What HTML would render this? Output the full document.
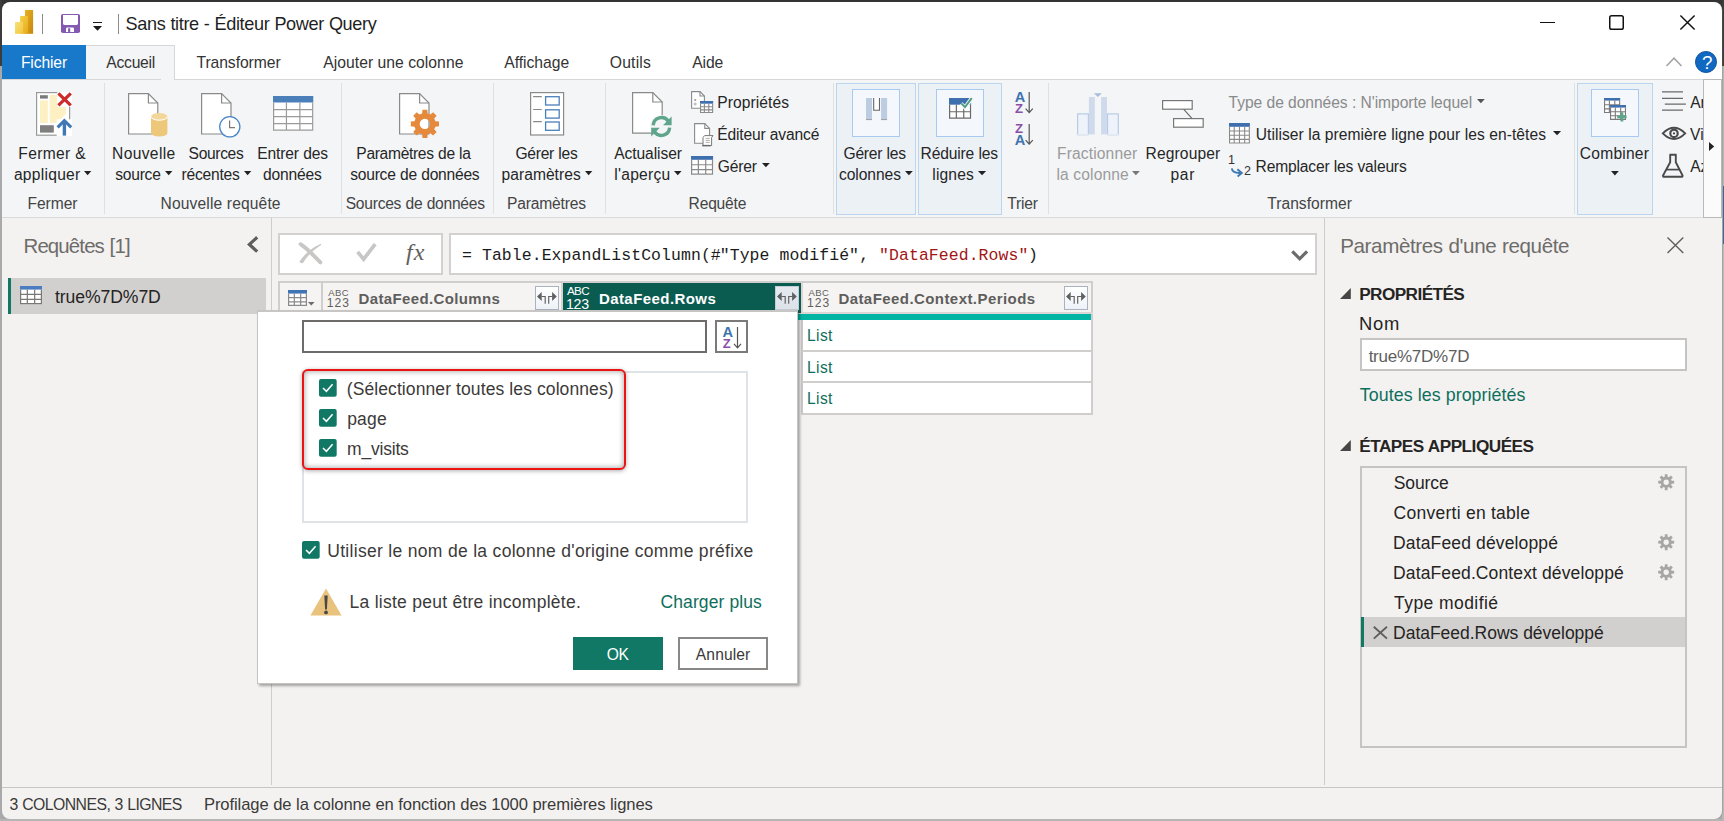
<!DOCTYPE html>
<html lang="fr"><head><meta charset="utf-8"><title>Sans titre - Éditeur Power Query</title>
<style>html,body{margin:0;padding:0}body{width:1724px;height:821px;overflow:hidden;position:relative;background:#a8a8a8}
div,span,svg{position:absolute;box-sizing:border-box}.t{white-space:pre;line-height:1}svg{overflow:visible}</style></head>
<body>
<div style="left:0px;top:0px;width:1724px;height:11px;background:#343434"></div>
<div style="left:1722px;top:0px;width:2px;height:66px;background:#3c3c3c"></div>
<div style="left:1722px;top:66px;width:2px;height:120px;background:#b6b6b6"></div>
<div style="left:1722px;top:186px;width:2px;height:58px;background:#3a6a9a"></div>
<div style="left:1722px;top:244px;width:2px;height:577px;background:#b8b8b8"></div>
<div style="left:1.5px;top:1.5px;width:1721px;height:818px;border-radius:8.5px;background:linear-gradient(#4a4a4a 0,#4a4a4a 64px,#a4a4a4 64px)"></div>
<div style="left:0px;top:0px;width:2px;height:66px;background:#3c3c3c"></div>
<div style="left:0px;top:66px;width:2px;height:755px;background:#a9a9a9"></div>
<div style="left:0px;top:819px;width:1724px;height:2px;background:#b4b5b4"></div>
<div style="left:2px;top:2px;width:1720px;height:817px;border-radius:8px;background:linear-gradient(#fff 0,#fff 78px,#f3f5f7 78px,#f3f5f7 215px,#f3f2f1 215px)"></div>
<svg style="left:15px;top:10px;" width="19" height="24" viewBox="0 0 19 24"><defs><linearGradient id="g1" x1="0" y1="0" x2="1" y2="1"><stop offset="0" stop-color="#e8b01f"/><stop offset="1" stop-color="#c7860d"/></linearGradient>
<linearGradient id="g2" x1="0" y1="0" x2="1" y2="1"><stop offset="0" stop-color="#f6d048"/><stop offset="1" stop-color="#e6a91c"/></linearGradient>
<linearGradient id="g3" x1="0" y1="0" x2="1" y2="1"><stop offset="0" stop-color="#f8e17a"/><stop offset="1" stop-color="#f3c73a"/></linearGradient></defs>
<rect x="10" y="0" width="8.1" height="23.8" fill="url(#g1)"/><rect x="5.1" y="6" width="8" height="17.8" fill="url(#g2)"/><rect x="0" y="12" width="8" height="11.8" fill="url(#g3)"/></svg>
<div style="left:42px;top:14px;width:1px;height:20px;background:#8c8c8c"></div>
<div style="left:118px;top:14px;width:1px;height:20px;background:#8c8c8c"></div>
<svg style="left:61px;top:14px;" width="19" height="19" viewBox="0 0 19 19"><rect x="0" y="0" width="19" height="19" rx="1.8" fill="#8559b2"/><path d="M2 1H17V9.6Q17 11 15.6 11H3.4Q2 11 2 9.6Z" fill="#fff"/><path d="M5 18V14.7Q5 13.5 6.2 13.5H11.8Q13 13.5 13 14.7V18H9.2V14.3H7.1V18Z" fill="#fff"/></svg>
<div style="left:93px;top:22px;width:9.2px;height:1.4px;background:#1a1a1a"></div>
<svg style="left:93.1px;top:25.9px;" width="9" height="4.8" viewBox="0 0 9 4.8"><path d="M0 0H9L4.5 4.8Z" fill="#1a1a1a"/></svg>
<span class="t" style="left:125.59px;top:15.00px;font:400 18.1px/1 'Liberation Sans',sans-serif;color:#1f1f1f;letter-spacing:-0.357px;word-spacing:0.357px;">Sans titre - Éditeur Power Query</span>
<div style="left:1540px;top:21.6px;width:15.2px;height:1.4px;background:#111"></div>
<svg style="left:1609px;top:15px;" width="15" height="15" viewBox="0 0 15 15"><rect x="0.75" y="0.75" width="13.5" height="13.5" rx="1.8" fill="none" stroke="#111" stroke-width="1.5"/></svg>
<svg style="left:1680px;top:15px;" width="15" height="15" viewBox="0 0 15 15"><path d="M0.4 0.4L14.6 14.6M14.6 0.4L0.4 14.6" stroke="#111" stroke-width="1.45" fill="none"/></svg>
<svg style="left:1666px;top:57px;" width="16" height="10" viewBox="0 0 16 10"><path d="M0.5 9L8 1.2L15.5 9" stroke="#a3a3a3" stroke-width="1.5" fill="none"/></svg>
<div style="left:1695.2px;top:51px;width:21.8px;height:21.8px;border-radius:50%;background:#1168c2;border:1px solid #0c55a0"></div>
<span class="t" style="left:1702.05px;top:54.00px;font:400 18.8px/1 'Liberation Sans',sans-serif;color:#fff;">?</span>
<div style="left:2px;top:45px;width:84px;height:34.5px;background:#1878c9"></div>
<div style="left:174px;top:78.8px;width:1548px;height:1.2px;background:#d6d7d9"></div>
<div style="left:86px;top:44.8px;width:89.2px;height:35.5px;background:#f3f5f7;border:1.2px solid #d6d7d9;border-bottom:0;border-left:0"></div>
<div style="left:2px;top:78.8px;width:159px;height:1.2px;background:#d6d7d9"></div>
<span class="t" style="left:20.90px;top:55.00px;font:400 15.7px/1 'Liberation Sans',sans-serif;color:#fff;letter-spacing:-0.128px;">Fichier</span>
<span class="t" style="left:106.26px;top:55.00px;font:400 15.7px/1 'Liberation Sans',sans-serif;color:#333;letter-spacing:-0.256px;">Accueil</span>
<span class="t" style="left:196.45px;top:55.00px;font:400 15.7px/1 'Liberation Sans',sans-serif;color:#333;letter-spacing:-0.061px;">Transformer</span>
<span class="t" style="left:323.26px;top:55.00px;font:400 15.7px/1 'Liberation Sans',sans-serif;color:#333;letter-spacing:0.031px;">Ajouter une colonne</span>
<span class="t" style="left:504.26px;top:55.00px;font:400 15.7px/1 'Liberation Sans',sans-serif;color:#333;letter-spacing:-0.031px;">Affichage</span>
<span class="t" style="left:609.85px;top:55.00px;font:400 15.7px/1 'Liberation Sans',sans-serif;color:#333;letter-spacing:0.168px;">Outils</span>
<span class="t" style="left:692.36px;top:55.00px;font:400 15.7px/1 'Liberation Sans',sans-serif;color:#333;letter-spacing:-0.198px;">Aide</span>
<div style="left:2px;top:216.6px;width:1720px;height:1.3px;background:#d9d9d9"></div>
<div style="left:103.9px;top:83px;width:1.2px;height:131px;background:#dfe0e2"></div>
<div style="left:340.6px;top:83px;width:1.2px;height:131px;background:#dfe0e2"></div>
<div style="left:492.9px;top:83px;width:1.2px;height:131px;background:#dfe0e2"></div>
<div style="left:604.9px;top:83px;width:1.2px;height:131px;background:#dfe0e2"></div>
<div style="left:832.6px;top:83px;width:1.2px;height:131px;background:#dfe0e2"></div>
<div style="left:1047.6px;top:83px;width:1.2px;height:131px;background:#dfe0e2"></div>
<div style="left:1573.8px;top:83px;width:1.2px;height:131px;background:#dfe0e2"></div>
<div style="left:836.2px;top:83.2px;width:79.6px;height:131.6px;background:#ecf1f6;border:1.2px solid #bcd5ef"></div>
<div style="left:918px;top:83.2px;width:83.8px;height:131.6px;background:#ecf1f6;border:1.2px solid #bcd5ef"></div>
<div style="left:1577.4px;top:83.2px;width:75.2px;height:131.6px;background:#ecf1f6;border:1.2px solid #bcd5ef"></div>
<div style="left:852px;top:89px;width:48px;height:47.8px;background:#f4f7fb;border:1.2px solid #a8caf0"></div>
<div style="left:936px;top:89px;width:48px;height:47.8px;background:#f4f7fb;border:1.2px solid #a8caf0"></div>
<div style="left:1591.2px;top:89px;width:47.6px;height:47.8px;background:#f4f7fb;border:1.2px solid #a8caf0"></div>
<span class="t" style="left:18.31px;top:146.00px;font:400 15.6px/1 'Liberation Sans',sans-serif;color:#262626;letter-spacing:0.344px;">Fermer &amp;</span>
<span class="t" style="left:13.94px;top:167.00px;font:400 15.6px/1 'Liberation Sans',sans-serif;color:#262626;letter-spacing:0.263px;">appliquer</span>
<svg style="left:83.8px;top:170.9px;" width="7.3" height="4.2" viewBox="0 0 7.3 4.2"><path d="M0 0H7.3L3.65 4.2Z" fill="#222"/></svg>
<span class="t" style="left:112.11px;top:146.00px;font:400 15.6px/1 'Liberation Sans',sans-serif;color:#262626;letter-spacing:0.338px;">Nouvelle</span>
<span class="t" style="left:115.17px;top:167.00px;font:400 15.6px/1 'Liberation Sans',sans-serif;color:#262626;letter-spacing:-0.222px;">source</span>
<svg style="left:165px;top:170.9px;" width="7.4" height="4.2" viewBox="0 0 7.4 4.2"><path d="M0 0H7.4L3.7 4.2Z" fill="#222"/></svg>
<span class="t" style="left:188.60px;top:146.00px;font:400 15.6px/1 'Liberation Sans',sans-serif;color:#262626;letter-spacing:-0.344px;">Sources</span>
<span class="t" style="left:181.59px;top:167.00px;font:400 15.6px/1 'Liberation Sans',sans-serif;color:#262626;letter-spacing:-0.238px;">récentes</span>
<svg style="left:243.8px;top:170.9px;" width="7.3" height="4.2" viewBox="0 0 7.3 4.2"><path d="M0 0H7.3L3.65 4.2Z" fill="#222"/></svg>
<span class="t" style="left:257.31px;top:146.00px;font:400 15.6px/1 'Liberation Sans',sans-serif;color:#262626;letter-spacing:-0.153px;word-spacing:0.153px;">Entrer des</span>
<span class="t" style="left:262.94px;top:167.00px;font:400 15.6px/1 'Liberation Sans',sans-serif;color:#262626;letter-spacing:-0.176px;">données</span>
<span class="t" style="left:356.31px;top:146.00px;font:400 15.6px/1 'Liberation Sans',sans-serif;color:#262626;letter-spacing:-0.319px;word-spacing:0.319px;">Paramètres de la</span>
<span class="t" style="left:350.17px;top:167.00px;font:400 15.6px/1 'Liberation Sans',sans-serif;color:#262626;letter-spacing:-0.224px;word-spacing:0.224px;">source de données</span>
<span class="t" style="left:515.52px;top:146.00px;font:400 15.6px/1 'Liberation Sans',sans-serif;color:#262626;letter-spacing:-0.276px;word-spacing:0.276px;">Gérer les</span>
<span class="t" style="left:501.59px;top:167.00px;font:400 15.6px/1 'Liberation Sans',sans-serif;color:#262626;letter-spacing:0.029px;">paramètres</span>
<svg style="left:584.8px;top:170.9px;" width="7.3" height="4.2" viewBox="0 0 7.3 4.2"><path d="M0 0H7.3L3.65 4.2Z" fill="#222"/></svg>
<span class="t" style="left:614.26px;top:146.00px;font:400 15.6px/1 'Liberation Sans',sans-serif;color:#262626;letter-spacing:-0.090px;">Actualiser</span>
<span class="t" style="left:614.35px;top:167.00px;font:400 15.6px/1 'Liberation Sans',sans-serif;color:#262626;letter-spacing:0.248px;">l'aperçu</span>
<svg style="left:673.5px;top:170.9px;" width="7.6" height="4.2" viewBox="0 0 7.6 4.2"><path d="M0 0H7.6L3.8 4.2Z" fill="#222"/></svg>
<span class="t" style="left:843.52px;top:146.00px;font:400 15.6px/1 'Liberation Sans',sans-serif;color:#262626;letter-spacing:-0.233px;word-spacing:0.233px;">Gérer les</span>
<span class="t" style="left:838.94px;top:167.00px;font:400 15.6px/1 'Liberation Sans',sans-serif;color:#262626;letter-spacing:-0.047px;">colonnes</span>
<svg style="left:904.5px;top:170.9px;" width="7.8" height="4.2" viewBox="0 0 7.8 4.2"><path d="M0 0H7.8L3.9 4.2Z" fill="#222"/></svg>
<span class="t" style="left:920.61px;top:146.00px;font:400 15.6px/1 'Liberation Sans',sans-serif;color:#262626;letter-spacing:-0.163px;word-spacing:0.163px;">Réduire les</span>
<span class="t" style="left:932.35px;top:167.00px;font:400 15.6px/1 'Liberation Sans',sans-serif;color:#262626;letter-spacing:0.129px;">lignes</span>
<svg style="left:977.5px;top:170.9px;" width="8.1" height="4.2" viewBox="0 0 8.1 4.2"><path d="M0 0H8.1L4.05 4.2Z" fill="#222"/></svg>
<span class="t" style="left:1057.11px;top:146.00px;font:400 15.6px/1 'Liberation Sans',sans-serif;color:#9b9b9b;letter-spacing:0.122px;">Fractionner</span>
<span class="t" style="left:1056.55px;top:167.00px;font:400 15.6px/1 'Liberation Sans',sans-serif;color:#9b9b9b;letter-spacing:0.113px;">la colonne</span>
<svg style="left:1132px;top:170.9px;" width="7.8" height="4.2" viewBox="0 0 7.8 4.2"><path d="M0 0H7.8L3.9 4.2Z" fill="#777"/></svg>
<span class="t" style="left:1145.61px;top:146.00px;font:400 15.6px/1 'Liberation Sans',sans-serif;color:#262626;letter-spacing:0.114px;">Regrouper</span>
<span class="t" style="left:1170.39px;top:167.00px;font:400 15.6px/1 'Liberation Sans',sans-serif;color:#262626;letter-spacing:0.753px;">par</span>
<span class="t" style="left:1579.82px;top:146.00px;font:400 15.6px/1 'Liberation Sans',sans-serif;color:#262626;letter-spacing:0.213px;">Combiner</span>
<svg style="left:1610.8px;top:171.1px;" width="7.8" height="4.4" viewBox="0 0 7.8 4.4"><path d="M0 0H7.8L3.9 4.4Z" fill="#222"/></svg>
<span class="t" style="left:27.51px;top:196.00px;font:400 15.6px/1 'Liberation Sans',sans-serif;color:#444;letter-spacing:-0.050px;">Fermer</span>
<span class="t" style="left:160.61px;top:196.00px;font:400 15.6px/1 'Liberation Sans',sans-serif;color:#444;letter-spacing:0.134px;">Nouvelle requête</span>
<span class="t" style="left:345.70px;top:196.00px;font:400 15.6px/1 'Liberation Sans',sans-serif;color:#444;letter-spacing:-0.250px;word-spacing:0.250px;">Sources de données</span>
<span class="t" style="left:507.01px;top:196.00px;font:400 15.6px/1 'Liberation Sans',sans-serif;color:#444;letter-spacing:-0.164px;">Paramètres</span>
<span class="t" style="left:688.61px;top:196.00px;font:400 15.6px/1 'Liberation Sans',sans-serif;color:#444;letter-spacing:-0.203px;">Requête</span>
<span class="t" style="left:1007.25px;top:196.00px;font:400 15.6px/1 'Liberation Sans',sans-serif;color:#444;letter-spacing:-0.197px;">Trier</span>
<span class="t" style="left:1267.25px;top:196.00px;font:400 15.6px/1 'Liberation Sans',sans-serif;color:#444;letter-spacing:0.033px;">Transformer</span>
<span class="t" style="left:717.31px;top:95.00px;font:400 15.6px/1 'Liberation Sans',sans-serif;color:#262626;letter-spacing:0.071px;">Propriétés</span>
<span class="t" style="left:717.31px;top:127.00px;font:400 15.6px/1 'Liberation Sans',sans-serif;color:#262626;letter-spacing:-0.167px;word-spacing:0.167px;">Éditeur avancé</span>
<span class="t" style="left:717.82px;top:159.00px;font:400 15.6px/1 'Liberation Sans',sans-serif;color:#262626;letter-spacing:-0.186px;">Gérer</span>
<svg style="left:761.8px;top:162.9px;" width="7.8" height="4.2" viewBox="0 0 7.8 4.2"><path d="M0 0H7.8L3.9 4.2Z" fill="#222"/></svg>
<span class="t" style="left:1228.55px;top:95.00px;font:400 15.6px/1 'Liberation Sans',sans-serif;color:#8a8a8a;letter-spacing:-0.038px;">Type de données : N'importe lequel</span>
<svg style="left:1476.5px;top:98.5px;" width="7.8" height="4.2" viewBox="0 0 7.8 4.2"><path d="M0 0H7.8L3.9 4.2Z" fill="#555"/></svg>
<span class="t" style="left:1255.69px;top:127.00px;font:400 15.6px/1 'Liberation Sans',sans-serif;color:#262626;letter-spacing:0.058px;">Utiliser la première ligne pour les en-têtes</span>
<svg style="left:1552.5px;top:130.5px;" width="8.1" height="4.2" viewBox="0 0 8.1 4.2"><path d="M0 0H8.1L4.05 4.2Z" fill="#222"/></svg>
<span class="t" style="left:1255.61px;top:159.00px;font:400 15.6px/1 'Liberation Sans',sans-serif;color:#262626;letter-spacing:-0.177px;word-spacing:0.177px;">Remplacer les valeurs</span>
<div style="left:1656px;top:84px;width:47.6px;height:130px;overflow:hidden">
<span class="t" style="left:34.16px;top:11.00px;font:400 15.6px/1 'Liberation Sans',sans-serif;color:#262626;">Ar</span>
<span class="t" style="left:34.12px;top:43.00px;font:400 15.6px/1 'Liberation Sans',sans-serif;color:#262626;">Vi</span>
<span class="t" style="left:34.16px;top:75.00px;font:400 15.6px/1 'Liberation Sans',sans-serif;color:#262626;">Az</span>
</div>
<div style="left:1703px;top:79px;width:19px;height:138.6px;background:#fbfbfc;border:1px solid #b9b9b9"></div>
<svg style="left:1709px;top:142px;" width="5.2" height="9" viewBox="0 0 5.2 9"><path d="M0 0L5.2 4.5L0 9Z" fill="#222"/></svg>
<svg style="left:36px;top:92px;" width="36" height="44" viewBox="0 0 36 44"><rect x="0.6" y="0.6" width="33" height="42.6" fill="#fff" stroke="#9a9a9a" stroke-width="1.2"/>
<rect x="4" y="3.2" width="7.8" height="3.4" fill="#7a7a7a"/>
<rect x="4" y="8.4" width="7.8" height="22.6" fill="#fdf0c2"/>
<path d="M13.7 3H21.4V12Q21.4 15 24.4 15H30V21.7L21.4 30.4V31H13.7Z" fill="#fdf0c2"/>
<rect x="4" y="33.2" width="13.8" height="7.4" fill="#7f7f7f"/>
<rect x="21.4" y="0" width="14.6" height="15" fill="#fff"/>
<path d="M22.4 1.4L34.8 13.4M34.8 1.4L22.4 13.4" stroke="#cc2b2b" stroke-width="3.2" fill="none"/>
<rect x="20.7" y="27.3" width="15.3" height="16.7" fill="#fff"/>
<path d="M28.4 43.6V30" stroke="#3f78b5" stroke-width="3.4" fill="none"/><path d="M21.6 35.4L28.4 28.6L35.2 35.4" stroke="#3f78b5" stroke-width="3" fill="none"/></svg>
<svg style="left:128.2px;top:92.9px;" width="30.4" height="41.6" viewBox="0 0 30.4 41.6"><path d="M0.6 0.6H20.4L29.8 10V41H0.6Z" fill="#fff" stroke="#8a8a8a" stroke-width="1.2"/><path d="M20.4 0.6V10H29.8" fill="none" stroke="#8a8a8a" stroke-width="1.2"/></svg>
<svg style="left:150.8px;top:112.8px;" width="16.4" height="23.6" viewBox="0 0 16.4 23.6"><path d="M0 3.6V20A8.2 3.6 0 0 0 16.4 20V3.6Z" fill="#eec87a"/><ellipse cx="8.2" cy="3.6" rx="8.2" ry="3.6" fill="#f3d79a"/><path d="M0 3.6A8.2 3.6 0 0 0 16.4 3.6" fill="none" stroke="#fff" stroke-width="1"/></svg>
<svg style="left:200.9px;top:92.9px;" width="30.6" height="41.6" viewBox="0 0 30.6 41.6"><path d="M0.6 0.6H20.6L30 10V41H0.6Z" fill="#fff" stroke="#8a8a8a" stroke-width="1.2"/><path d="M20.6 0.6V10H30" fill="none" stroke="#8a8a8a" stroke-width="1.2"/></svg>
<svg style="left:218.9px;top:115.9px;" width="21.6" height="21.6" viewBox="0 0 21.6 21.6"><circle cx="10.8" cy="10.8" r="10.1" fill="#fff" stroke="#4a86c8" stroke-width="1.3"/><path d="M10.6 4.6V11.6H16" fill="none" stroke="#7a7a7a" stroke-width="1.2"/></svg>
<svg style="left:272.9px;top:96.1px;" width="40.3" height="34.7" viewBox="0 0 40.3 34.7"><rect x="0" y="0" width="40.3" height="34.7" fill="#fff"/><rect x="0" y="0" width="40.3" height="6.5" fill="#4a7fba"/><path d="M0.6 6.5V34.1H39.7V6.5M13.4333 6.5V34.7M26.8667 6.5V34.7M0 13.55H40.3M0 20.6H40.3M0 27.65H40.3" fill="none" stroke="#9a9a9a" stroke-width="1.2"/></svg>
<svg style="left:399.1px;top:92.9px;" width="30.6" height="41.6" viewBox="0 0 30.6 41.6"><path d="M0.6 0.6H20.6L30 10V41H0.6Z" fill="#fff" stroke="#8a8a8a" stroke-width="1.2"/><path d="M20.6 0.6V10H30" fill="none" stroke="#8a8a8a" stroke-width="1.2"/></svg>
<svg style="left:410px;top:109px;" width="30" height="30" viewBox="0 0 30 30"><path d="M12.13 4.46L12.44 0.81L17.36 0.81L17.67 4.46L20.32 5.56L23.12 3.20L26.60 6.68L24.24 9.48L25.34 12.13L28.99 12.44L28.99 17.36L25.34 17.67L24.24 20.32L26.60 23.12L23.12 26.60L20.32 24.24L17.67 25.34L17.36 28.99L12.44 28.99L12.13 25.34L9.48 24.24L6.68 26.60L3.20 23.12L5.56 20.32L4.46 17.67L0.81 17.36L0.81 12.44L4.46 12.13L5.56 9.48L3.20 6.68L6.68 3.20L9.48 5.56ZM20.10 14.90A5.2 5.2 0 1 0 9.70 14.90A5.2 5.2 0 1 0 20.10 14.90Z" fill="#e58a3c" fill-rule="evenodd"/></svg>
<svg style="left:530px;top:92px;" width="34.2" height="43.6" viewBox="0 0 34.2 43.6"><rect x="0.6" y="0.6" width="33" height="42.4" fill="#fff" stroke="#8a8a8a" stroke-width="1.2"/>
<path d="M3.1 4.6H11.8M3.1 17.5H11.8M3.1 29.6H11.8" stroke="#8a8a8a" stroke-width="1.1"/>
<rect x="15.6" y="4.7" width="13.6" height="8.3" fill="#fff" stroke="#4a7fba" stroke-width="1.3"/><rect x="15.6" y="17.8" width="13.6" height="8.3" fill="#fff" stroke="#4a7fba" stroke-width="1.3"/><rect x="15.6" y="30" width="13.6" height="8.3" fill="#fff" stroke="#4a7fba" stroke-width="1.3"/></svg>
<svg style="left:631.9px;top:92px;" width="30.8" height="41.7" viewBox="0 0 30.8 41.7"><path d="M0.6 0.6H20.8L30.2 10V41.1H0.6Z" fill="#fff" stroke="#8a8a8a" stroke-width="1.2"/><path d="M20.8 0.6V10H30.2" fill="none" stroke="#8a8a8a" stroke-width="1.2"/></svg>
<svg style="left:649.5px;top:115.3px;" width="23" height="23" viewBox="0 0 23 23"><circle cx="11.4" cy="11.4" r="11.4" fill="#f3f5f7"/>
<path d="M3.2 10.4A8.3 8.3 0 0 1 18.3 6.2" fill="none" stroke="#5fa58b" stroke-width="3.4"/><path d="M21.6 1.6V10.2H13Z" fill="#5fa58b"/>
<path d="M19.6 12.6A8.3 8.3 0 0 1 4.5 16.8" fill="none" stroke="#5fa58b" stroke-width="3.4"/><path d="M1.2 21.4V12.8H9.8Z" fill="#5fa58b"/></svg>
<svg style="left:691px;top:91.2px;" width="14" height="17.8" viewBox="0 0 14 17.8"><path d="M0.6 0.6H9L13.4 5V17.2H0.6Z" fill="#fff" stroke="#8a8a8a" stroke-width="1.1"/><path d="M9 0.6V5H13.4" fill="none" stroke="#8a8a8a" stroke-width="1.1"/><circle cx="4.2" cy="9" r="1.1" fill="#999"/><circle cx="4.2" cy="13" r="1" fill="none" stroke="#999" stroke-width="0.8"/></svg>
<svg style="left:699.9px;top:100.9px;" width="13.2" height="12" viewBox="0 0 13.2 12"><rect x="0" y="0" width="13.2" height="12" fill="#fff"/><rect x="0" y="0" width="13.2" height="2.7" fill="#3f6fae"/><path d="M0.55 2.7V11.45H12.65V2.7M4.4 2.7V12M8.8 2.7V12M0 5.8H13.2M0 8.9H13.2" fill="none" stroke="#8a8a8a" stroke-width="1.1"/></svg>
<svg style="left:693.9px;top:123.2px;" width="16.2" height="20.8" viewBox="0 0 16.2 20.8"><path d="M0.6 0.6H10.8L15.6 5.4V20.2H0.6Z" fill="#fff" stroke="#8a8a8a" stroke-width="1.1"/><path d="M10.8 0.6V5.4H15.6" fill="none" stroke="#8a8a8a" stroke-width="1.1"/></svg>
<svg style="left:702px;top:134.6px;" width="12" height="11.4" viewBox="0 0 12 11.4"><path d="M2.6 0.6H11L9.6 2.6V10.6H1V2.4Z" fill="#fff" stroke="#777" stroke-width="1"/><path d="M0.2 10.6H8.6" stroke="#666" stroke-width="1.4"/><path d="M3.6 3.4H7.8M3.6 5.4H7.8M3.6 7.4H7.8" stroke="#999" stroke-width="0.8"/></svg>
<svg style="left:691px;top:156.1px;" width="22.1" height="18.7" viewBox="0 0 22.1 18.7"><rect x="0" y="0" width="22.1" height="18.7" fill="#fff"/><rect x="0" y="0" width="22.1" height="3.8" fill="#3f6fae"/><path d="M0.6 3.8V18.1H21.5V3.8M7.36667 3.8V18.7M14.7333 3.8V18.7M0 8.76667H22.1M0 13.7333H22.1" fill="none" stroke="#8a8a8a" stroke-width="1.2"/></svg>
<svg style="left:865.9px;top:97.9px;" width="21.2" height="22.2" viewBox="0 0 21.2 22.2"><rect x="0" y="0" width="6" height="22" fill="#bccde2"/><rect x="15.1" y="0" width="6" height="22" fill="#bccde2"/><path d="M0 21.6H6M15.1 21.6H21.1" stroke="#9a9a9a" stroke-width="0.9"/><path d="M7.7 0V12.2H13.5V0" fill="#fff" stroke="#666" stroke-width="1.1"/></svg>
<svg style="left:948.8px;top:97.9px;" width="22.1" height="20.8" viewBox="0 0 22.1 20.8"><rect x="0" y="0" width="22.1" height="20.8" fill="#fff"/><rect x="0" y="0" width="22.1" height="6.7" fill="#3f6fae"/><path d="M0.6 6.7V20.2H21.5V6.7M7.36667 6.7V20.8M14.7333 6.7V20.8M0 13.75H22.1" fill="none" stroke="#6a6a6a" stroke-width="1.2"/></svg>
<svg style="left:959.6px;top:96.6px;" width="13" height="12" viewBox="0 0 13 12"><path d="M1 6.6L5 10.4L12 1" fill="none" stroke="#f4f7fb" stroke-width="4"/><path d="M1.2 6.4L5 10L11.8 1.2" fill="none" stroke="#4f9d80" stroke-width="1.9"/></svg>
<span class="t" style="left:1014.63px;top:90.00px;font:700 14.6px/1 'Liberation Sans',sans-serif;color:#3e73b0;">A</span>
<span class="t" style="left:1015.00px;top:102.00px;font:700 13.2px/1 'Liberation Sans',sans-serif;color:#8b4fa8;">Z</span>
<svg style="left:1025.3px;top:91.8px;" width="8.4" height="21.4" viewBox="0 0 8.4 21.4"><path d="M4.2 0V20.4M0.6 16.6L4.2 20.6L7.8 16.6" fill="none" stroke="#555" stroke-width="1.2"/></svg>
<span class="t" style="left:1015.00px;top:122.00px;font:700 13.2px/1 'Liberation Sans',sans-serif;color:#8b4fa8;">Z</span>
<span class="t" style="left:1014.63px;top:133.00px;font:700 14.6px/1 'Liberation Sans',sans-serif;color:#3e73b0;">A</span>
<svg style="left:1025.3px;top:124px;" width="8.4" height="21" viewBox="0 0 8.4 21"><path d="M4.2 0V20M0.6 16.2L4.2 20.2L7.8 16.2" fill="none" stroke="#555" stroke-width="1.2"/></svg>
<svg style="left:1077.1px;top:93px;" width="42" height="42" viewBox="0 0 42 42"><rect x="0.6" y="20.9" width="10.8" height="21" fill="#edf2fb" stroke="#b9cbe4" stroke-width="1.2"/><rect x="30.5" y="20.9" width="10.8" height="21" fill="#edf2fb" stroke="#b9cbe4" stroke-width="1.2"/>
<rect x="11.9" y="4" width="5.9" height="38" fill="#cfdbed"/><rect x="24.1" y="4" width="5.9" height="38" fill="#cfdbed"/><path d="M16.9 0.2H24.9L20.9 4Z" fill="#a9bcd9"/><rect x="0" y="41.4" width="42" height="1" fill="#f3f5f7"/></svg>
<svg style="left:1162.1px;top:100.2px;" width="42" height="27.8" viewBox="0 0 42 27.8"><rect x="0.6" y="0.6" width="29.6" height="8.6" fill="#fff" stroke="#777" stroke-width="1.2"/><rect x="11.6" y="18.6" width="29.6" height="8.6" fill="#fff" stroke="#777" stroke-width="1.2"/><path d="M21.8 9.4L29.9 18.4" stroke="#666" stroke-width="1.1"/></svg>
<svg style="left:1229px;top:123.1px;" width="20.9" height="20.6" viewBox="0 0 20.9 20.6"><rect x="0" y="0" width="20.9" height="20.6" fill="#fff"/><rect x="0" y="0" width="20.9" height="3.8" fill="#3f6fae"/><path d="M0.55 3.8V20.05H20.35V3.8M5.225 3.8V20.6M10.45 3.8V20.6M15.675 3.8V20.6M0 8H20.9M0 12.2H20.9M0 16.4H20.9" fill="none" stroke="#8a8a8a" stroke-width="1.1"/></svg>
<span class="t" style="left:1228.06px;top:154.00px;font:400 12.6px/1 'Liberation Sans',sans-serif;color:#333;">1</span>
<span class="t" style="left:1243.97px;top:165.00px;font:400 12.6px/1 'Liberation Sans',sans-serif;color:#333;">2</span>
<svg style="left:1231px;top:167.6px;" width="12" height="8.6" viewBox="0 0 12 8.6"><path d="M0.8 0.4Q1.4 5.4 9.4 5" fill="none" stroke="#3f78b5" stroke-width="1.9"/><path d="M6.4 1.2L10.8 5L6.6 8.4" fill="none" stroke="#3f78b5" stroke-width="1.9"/></svg>
<svg style="left:1603.9px;top:98px;" width="16.2" height="15" viewBox="0 0 16.2 15"><rect x="0" y="0" width="16.2" height="15" fill="#fff"/><rect x="0" y="0" width="16.2" height="2.6" fill="#3f6fae"/><path d="M0.55 2.6V14.45H15.65V2.6M5.4 2.6V15M10.8 2.6V15M0 6.73333H16.2M0 10.8667H16.2" fill="none" stroke="#7a7a7a" stroke-width="1.1"/></svg>
<svg style="left:1610px;top:105px;" width="16" height="14.9" viewBox="0 0 16 14.9"><rect x="0" y="0" width="16" height="14.9" fill="#fff"/><rect x="0" y="0" width="16" height="2.6" fill="#3f6fae"/><path d="M0.55 2.6V14.35H15.45V2.6M5.33333 2.6V14.9M10.6667 2.6V14.9M0 6.7H16M0 10.8H16" fill="none" stroke="#7a7a7a" stroke-width="1.1"/></svg>
<svg style="left:1617.4px;top:111.6px;" width="9.8" height="9.6" viewBox="0 0 9.8 9.6"><rect x="0" y="0" width="9.8" height="9.6" fill="#f4f7fb" opacity="0"/><path d="M4.9 0.2V9.4M0.2 4.8H9.6" stroke="#5fa58b" stroke-width="2.8"/></svg>
<svg style="left:1662px;top:91px;" width="24.2" height="20" viewBox="0 0 24.2 20"><path d="M0 0.9H21M0 7.3H21M2.8 13.1H23.9M0 19.2H21" stroke="#6a6a6a" stroke-width="1.2"/></svg>
<svg style="left:1662px;top:127.4px;" width="24" height="12.8" viewBox="0 0 24 12.8"><path d="M0.8 6.4Q12 -4.8 23.2 6.4Q12 17.6 0.8 6.4Z" fill="none" stroke="#4a4a4a" stroke-width="1.9"/><circle cx="12" cy="6.4" r="3.7" fill="none" stroke="#4a4a4a" stroke-width="2.2"/><circle cx="12" cy="6.4" r="1.1" fill="#4a4a4a"/></svg>
<svg style="left:1662.3px;top:154.3px;" width="21.6" height="23.6" viewBox="0 0 21.6 23.6"><path d="M7.4 0.8H14.6M8.2 0.8V8.2L1 21.6Q0.8 22.8 2.2 22.8H19.4Q20.8 22.8 20.6 21.6L13.8 8.2V0.8" fill="none" stroke="#4a4a4a" stroke-width="1.9"/><path d="M4.4 15.6H17.4" stroke="#4a4a4a" stroke-width="1.7"/></svg>
<div style="left:271.2px;top:217.5px;width:1.2px;height:567.5px;background:#cfcdcb"></div>
<div style="left:1324.2px;top:217.5px;width:1.2px;height:567.5px;background:#cfcdcb"></div>
<div style="left:2px;top:787px;width:1720px;height:1.4px;background:#c8c6c4"></div>
<span class="t" style="left:23.52px;top:236.00px;font:400 20.4px/1 'Liberation Sans',sans-serif;color:#6e6c69;letter-spacing:-0.856px;word-spacing:0.856px;">Requêtes [1]</span>
<svg style="left:247px;top:236px;" width="11.6" height="16.8" viewBox="0 0 11.6 16.8"><path d="M10.2 1.2L2.4 8.4L10.2 15.6" fill="none" stroke="#5f5d5b" stroke-width="3.2"/></svg>
<div style="left:8.3px;top:278.3px;width:257.4px;height:35.5px;background:#d2d0ce"></div>
<div style="left:8.3px;top:278.3px;width:2.9px;height:35.5px;background:#117865"></div>
<svg style="left:20px;top:286.3px;" width="22" height="18.2" viewBox="0 0 22 18.2"><rect x="0" y="0" width="22" height="18.2" fill="#fff"/><rect x="0" y="0" width="22" height="3.6" fill="#4a7cc0"/><path d="M0.6 3.6V17.6H21.4V3.6M7.33333 3.6V18.2M14.6667 3.6V18.2M0 8.46667H22M0 13.3333H22" fill="none" stroke="#7a7876" stroke-width="1.2"/></svg>
<span class="t" style="left:54.94px;top:289.00px;font:400 17.6px/1 'Liberation Sans',sans-serif;color:#252423;letter-spacing:-0.079px;">true%7D%7D</span>
<span class="t" style="left:9.61px;top:797.00px;font:400 15.8px/1 'Liberation Sans',sans-serif;color:#3b3a39;letter-spacing:-0.561px;word-spacing:0.561px;">3 COLONNES, 3 LIGNES</span>
<span class="t" style="left:203.93px;top:797.00px;font:400 16.6px/1 'Liberation Sans',sans-serif;color:#3b3a39;letter-spacing:-0.096px;word-spacing:0.096px;">Profilage de la colonne en fonction des 1000 premières lignes</span>
<div style="left:278.1px;top:233px;width:164.7px;height:42px;background:#fff;border:2px solid #d3d1cf"></div>
<div style="left:448.9px;top:233px;width:868.6px;height:42px;background:#fff;border:2px solid #d3d1cf"></div>
<svg style="left:299px;top:243px;" width="22" height="20" viewBox="0 0 22 20"><path d="M1.6 1.2Q9 6.4 21.4 19.4" fill="none" stroke="#c9c7c5" stroke-width="3.9" stroke-linecap="round"/><path d="M1 19Q8 8 21.6 1.6Q10 9 3.4 19.6Z" fill="#c9c7c5" stroke="#c9c7c5" stroke-width="1.2" stroke-linejoin="round"/></svg>
<svg style="left:356.4px;top:243px;" width="21" height="19.6" viewBox="0 0 21 19.6"><path d="M1.6 8.8L7.6 16.2L19.2 1.2" fill="none" stroke="#c9c7c5" stroke-width="3.7"/></svg>
<span class="t" style="left:405.96px;top:240.00px;font:italic 400 24px/1 'Liberation Serif',serif;color:#605e5c;letter-spacing:1.080px;">fx</span>
<svg style="left:1290.8px;top:250px;" width="17.4" height="11" viewBox="0 0 17.4 11"><path d="M1.3 1.3L8.7 8.8L16.1 1.3" fill="none" stroke="#6b6b6b" stroke-width="3.2"/></svg>
<span class="t" style="left:462.05px;top:248.00px;font:400 16.47px/1 'Liberation Mono',monospace;color:#1b1b1b;letter-spacing:0.078px;">= Table.ExpandListColumn(#</span>
<span class="t" style="left:719.74px;top:248.00px;font:400 16.47px/1 'Liberation Mono',monospace;color:#1b1b1b;letter-spacing:0.078px;">"Type modifié"</span>
<span class="t" style="left:859.30px;top:248.00px;font:400 16.47px/1 'Liberation Mono',monospace;color:#1b1b1b;letter-spacing:0.078px;">, </span>
<span class="t" style="left:879.10px;top:248.00px;font:400 16.47px/1 'Liberation Mono',monospace;color:#a31515;letter-spacing:0.078px;">"DataFeed.Rows"</span>
<span class="t" style="left:1028.00px;top:248.00px;font:400 16.47px/1 'Liberation Mono',monospace;color:#1b1b1b;letter-spacing:0.078px;">)</span>
<div style="left:278px;top:281.2px;width:815px;height:32.6px;background:#f5f4f3;border:2px solid #d0cecc;border-bottom:0"></div>
<div style="left:278px;top:312px;width:815px;height:1.8px;background:#ddd6d4"></div>
<div style="left:278px;top:310px;width:524px;height:2px;background:#c8c6c4"></div>
<div style="left:321px;top:283px;width:2px;height:28px;background:#d0cecc"></div>
<div style="left:561px;top:283px;width:2px;height:28px;background:#d8d2d0"></div>
<div style="left:801.2px;top:283px;width:1.7px;height:30px;background:#ddd6d4"></div>
<svg style="left:287.9px;top:289.9px;" width="19" height="15.9" viewBox="0 0 19 15.9"><rect x="0" y="0" width="19" height="15.9" fill="#fff"/><rect x="0" y="0" width="19" height="3.6" fill="#3f74b5"/><path d="M0.6 3.6V15.3H18.4V3.6M6.33333 3.6V15.9M12.6667 3.6V15.9M0 7.7H19M0 11.8H19" fill="none" stroke="#8a8a8a" stroke-width="1.2"/></svg>
<svg style="left:308.4px;top:302.2px;" width="6.6" height="3.6" viewBox="0 0 6.6 3.6"><path d="M0 0H6.6L3.3 3.6Z" fill="#6a6a6a"/></svg>
<span class="t" style="left:328.18px;top:288.00px;font:400 9.5px/1 'Liberation Sans',sans-serif;color:#605e5c;letter-spacing:0.417px;">ABC</span>
<span class="t" style="left:326.69px;top:297.00px;font:400 12.1px/1 'Liberation Sans',sans-serif;color:#605e5c;letter-spacing:1.072px;">123</span>
<span class="t" style="left:358.59px;top:291.00px;font:700 15px/1 'Liberation Sans',sans-serif;color:#605e5c;letter-spacing:0.357px;">DataFeed.Columns</span>
<div style="left:535.3px;top:286.2px;width:23.6px;height:23.6px;background:linear-gradient(#fff,#eef2f7);border:1px solid #a9b2be"></div>
<svg style="left:537.2px;top:292px;" width="19.8" height="11.8" viewBox="0 0 19.8 11.8"><path d="M0 4.5L4.7 0V9Z M19.8 4.5L15.1 0V9Z" fill="#606060"/><path d="M4.5 4.5H8.2V11.8M15.3 4.5H11.7V11.8" fill="none" stroke="#606060" stroke-width="1.15"/></svg>
<div style="left:563px;top:283px;width:238.1px;height:29.8px;background:#0a5c51"></div>
<span class="t" style="left:566.97px;top:285.00px;font:400 11.7px/1 'Liberation Sans',sans-serif;color:#fff;letter-spacing:-0.702px;">ABC</span>
<span class="t" style="left:565.93px;top:297.00px;font:400 14.2px/1 'Liberation Sans',sans-serif;color:#fff;letter-spacing:-0.255px;">123</span>
<span class="t" style="left:598.89px;top:291.00px;font:700 15px/1 'Liberation Sans',sans-serif;color:#fff;letter-spacing:0.436px;">DataFeed.Rows</span>
<div style="left:775.2px;top:286.2px;width:23.6px;height:23.6px;background:linear-gradient(#e6e9f0,#dde2ea);border:1px solid #c5ccd6"></div>
<svg style="left:777.1px;top:292px;" width="19.8" height="11.8" viewBox="0 0 19.8 11.8"><path d="M0 4.5L4.7 0V9Z M19.8 4.5L15.1 0V9Z" fill="#606060"/><path d="M4.5 4.5H8.2V11.8M15.3 4.5H11.7V11.8" fill="none" stroke="#606060" stroke-width="1.15"/></svg>
<span class="t" style="left:808.48px;top:288.00px;font:400 9.5px/1 'Liberation Sans',sans-serif;color:#605e5c;letter-spacing:0.417px;">ABC</span>
<span class="t" style="left:806.99px;top:297.00px;font:400 12.1px/1 'Liberation Sans',sans-serif;color:#605e5c;letter-spacing:1.072px;">123</span>
<span class="t" style="left:838.39px;top:291.00px;font:700 15px/1 'Liberation Sans',sans-serif;color:#605e5c;letter-spacing:0.435px;">DataFeed.Context.Periods</span>
<div style="left:1064.2px;top:286.2px;width:23.6px;height:23.6px;background:linear-gradient(#fff,#eef2f7);border:1px solid #a9b2be"></div>
<svg style="left:1066.1px;top:292px;" width="19.8" height="11.8" viewBox="0 0 19.8 11.8"><path d="M0 4.5L4.7 0V9Z M19.8 4.5L15.1 0V9Z" fill="#606060"/><path d="M4.5 4.5H8.2V11.8M15.3 4.5H11.7V11.8" fill="none" stroke="#606060" stroke-width="1.15"/></svg>
<div style="left:563px;top:313.8px;width:528px;height:6.1px;background:#02b4a4"></div>
<div style="left:802.9px;top:319.9px;width:288.1px;height:93px;background:#fff"></div>
<div style="left:800.8px;top:319.9px;width:2.1px;height:94.6px;background:#cbc9c7"></div>
<div style="left:1090.8px;top:313.5px;width:1.8px;height:101px;background:#d0cecc"></div>
<div style="left:800.8px;top:350px;width:291.8px;height:2px;background:#d0cecc"></div>
<div style="left:800.8px;top:381px;width:291.8px;height:2px;background:#d0cecc"></div>
<div style="left:800.8px;top:413px;width:291.8px;height:2px;background:#d0cecc"></div>
<span class="t" style="left:807.11px;top:328.00px;font:400 15.6px/1 'Liberation Sans',sans-serif;color:#0e6e5c;letter-spacing:0.315px;">List</span>
<span class="t" style="left:807.11px;top:360.00px;font:400 15.6px/1 'Liberation Sans',sans-serif;color:#0e6e5c;letter-spacing:0.315px;">List</span>
<span class="t" style="left:807.11px;top:391.00px;font:400 15.6px/1 'Liberation Sans',sans-serif;color:#0e6e5c;letter-spacing:0.315px;">List</span>
<div style="left:257.4px;top:309.8px;width:540.4px;height:374.6px;background:#fff;border:1px solid #c6c4c2;border-top:2px solid #c8c6c4;box-shadow:1.5px 1.5px 2.5px rgba(0,0,0,.32)"></div>
<div style="left:302px;top:320.2px;width:404.7px;height:32.6px;background:#fff;border:2px solid #6e6c6a"></div>
<div style="left:715.1px;top:320.2px;width:32.9px;height:32.6px;background:#fff;border:2px solid #7c7a78"></div>
<span class="t" style="left:722.43px;top:325.00px;font:700 14.6px/1 'Liberation Sans',sans-serif;color:#3e73b0;">A</span>
<span class="t" style="left:722.81px;top:337.00px;font:700 13px/1 'Liberation Sans',sans-serif;color:#8b4fa8;">Z</span>
<svg style="left:733px;top:327px;" width="9" height="21.4" viewBox="0 0 9 21.4"><path d="M4.5 0V20.6M1 16.8L4.5 20.8L8 16.8" fill="none" stroke="#555" stroke-width="1.2"/></svg>
<div style="left:302.4px;top:371px;width:445.6px;height:152px;background:#fff;border:2px solid #dfe3e8"></div>
<div style="left:302.4px;top:369px;width:324px;height:101.2px;background:#fff;border:2px solid #ec1313;border-radius:6px;box-shadow:0 1px 4px rgba(0,0,0,.32),inset 0 0 5px 1px rgba(0,0,0,.3)"></div>
<svg style="left:319.2px;top:379.2px;" width="17.7" height="17.7" viewBox="0 0 17.7 17.7"><rect x="0" y="0" width="17.7" height="17.7" rx="2" fill="#117865"/><path d="M4 9L7.4 12.3L13.6 5.2" fill="none" stroke="#fff" stroke-width="1.5"/></svg>
<span class="t" style="left:346.71px;top:381.00px;font:400 17.5px/1 'Liberation Sans',sans-serif;color:#3b3a39;letter-spacing:0.100px;">(Sélectionner toutes les colonnes)</span>
<svg style="left:319.2px;top:409.2px;" width="17.7" height="17.7" viewBox="0 0 17.7 17.7"><rect x="0" y="0" width="17.7" height="17.7" rx="2" fill="#117865"/><path d="M4 9L7.4 12.3L13.6 5.2" fill="none" stroke="#fff" stroke-width="1.5"/></svg>
<span class="t" style="left:347.16px;top:411.00px;font:400 17.5px/1 'Liberation Sans',sans-serif;color:#3b3a39;letter-spacing:0.229px;">page</span>
<svg style="left:319.2px;top:439.2px;" width="17.7" height="17.7" viewBox="0 0 17.7 17.7"><rect x="0" y="0" width="17.7" height="17.7" rx="2" fill="#117865"/><path d="M4 9L7.4 12.3L13.6 5.2" fill="none" stroke="#fff" stroke-width="1.5"/></svg>
<span class="t" style="left:347.12px;top:441.00px;font:400 17.5px/1 'Liberation Sans',sans-serif;color:#3b3a39;letter-spacing:-0.218px;">m_visits</span>
<svg style="left:302.2px;top:541.2px;" width="17.7" height="17.7" viewBox="0 0 17.7 17.7"><rect x="0" y="0" width="17.7" height="17.7" rx="2" fill="#117865"/><path d="M4 9L7.4 12.3L13.6 5.2" fill="none" stroke="#fff" stroke-width="1.5"/></svg>
<span class="t" style="left:327.24px;top:543.00px;font:400 17.5px/1 'Liberation Sans',sans-serif;color:#3b3a39;letter-spacing:0.309px;">Utiliser le nom de la colonne d'origine comme préfixe</span>
<svg style="left:310px;top:588px;" width="32" height="28" viewBox="0 0 32 28"><path d="M16 0.6L31.6 27.6H0.4Z" fill="#e9c27d"/><path d="M14.3 7.4H17.7L16.9 21.4H15.1Z" fill="#4a4846"/><circle cx="16" cy="24.4" r="1.9" fill="#4a4846"/></svg>
<span class="t" style="left:349.56px;top:594.00px;font:400 17.5px/1 'Liberation Sans',sans-serif;color:#3b3a39;letter-spacing:0.258px;">La liste peut être incomplète.</span>
<span class="t" style="left:660.52px;top:594.00px;font:400 17.5px/1 'Liberation Sans',sans-serif;color:#0e6e5c;letter-spacing:0.100px;">Charger plus</span>
<div style="left:573px;top:637px;width:90px;height:33px;background:#117865"></div>
<span class="t" style="left:606.86px;top:647.00px;font:400 15.6px/1 'Liberation Sans',sans-serif;color:#fff;letter-spacing:-0.506px;">OK</span>
<div style="left:678px;top:637px;width:90px;height:33px;background:#fff;border:2px solid #8a8886"></div>
<span class="t" style="left:695.86px;top:647.00px;font:400 15.6px/1 'Liberation Sans',sans-serif;color:#3b3a39;letter-spacing:0.099px;">Annuler</span>
<span class="t" style="left:1340.20px;top:236.00px;font:400 20.6px/1 'Liberation Sans',sans-serif;color:#6e6c69;letter-spacing:-0.388px;word-spacing:0.388px;">Paramètres d'une requête</span>
<svg style="left:1666.8px;top:237px;" width="16.8" height="16.4" viewBox="0 0 16.8 16.4"><path d="M0.5 0.5L16.3 15.9M16.3 0.5L0.5 15.9" fill="none" stroke="#605e5c" stroke-width="1.4"/></svg>
<svg style="left:1340px;top:287.6px;" width="10.8" height="11" viewBox="0 0 10.8 11"><path d="M10.8 0V11H0Z" fill="#484644"/></svg>
<svg style="left:1340px;top:440px;" width="10.8" height="11" viewBox="0 0 10.8 11"><path d="M10.8 0V11H0Z" fill="#484644"/></svg>
<span class="t" style="left:1359.24px;top:286.00px;font:700 17.2px/1 'Liberation Sans',sans-serif;color:#252423;letter-spacing:-0.583px;">PROPRIÉTÉS</span>
<span class="t" style="left:1359.08px;top:315.00px;font:400 18.4px/1 'Liberation Sans',sans-serif;color:#252423;letter-spacing:0.645px;">Nom</span>
<div style="left:1360px;top:338.2px;width:326.8px;height:32.8px;background:#fff;border:2px solid #c6c4c2"></div>
<span class="t" style="left:1368.64px;top:348.00px;font:400 17px/1 'Liberation Sans',sans-serif;color:#605e5c;letter-spacing:-0.235px;">true%7D%7D</span>
<span class="t" style="left:1359.80px;top:387.00px;font:400 17.8px/1 'Liberation Sans',sans-serif;color:#0e6e5c;letter-spacing:0.079px;">Toutes les propriétés</span>
<span class="t" style="left:1359.24px;top:438.00px;font:700 17.2px/1 'Liberation Sans',sans-serif;color:#252423;letter-spacing:-0.509px;word-spacing:0.509px;">ÉTAPES APPLIQUÉES</span>
<div style="left:1360px;top:466.2px;width:326.8px;height:281.8px;border:2px solid #c6c4c2"></div>
<div style="left:1361.4px;top:617.3px;width:1324px;height:29.5px;background:#d2d0ce;width:323.8px"></div>
<div style="left:1361.2px;top:617.3px;width:3px;height:29.5px;background:#117865"></div>
<span class="t" style="left:1393.71px;top:475.00px;font:400 17.5px/1 'Liberation Sans',sans-serif;color:#252423;letter-spacing:-0.080px;">Source</span>
<svg style="left:1658px;top:473.6px;" width="16.4" height="16.4" viewBox="0 0 16.4 16.4"><path d="M6.76 2.79L6.81 0.22L9.59 0.22L9.64 2.79L11.01 3.36L12.86 1.57L14.83 3.54L13.04 5.39L13.61 6.76L16.18 6.81L16.18 9.59L13.61 9.64L13.04 11.01L14.83 12.86L12.86 14.83L11.01 13.04L9.64 13.61L9.59 16.18L6.81 16.18L6.76 13.61L5.39 13.04L3.54 14.83L1.57 12.86L3.36 11.01L2.79 9.64L0.22 9.59L0.22 6.81L2.79 6.76L3.36 5.39L1.57 3.54L3.54 1.57L5.39 3.36ZM10.90 8.20A2.7 2.7 0 1 0 5.50 8.20A2.7 2.7 0 1 0 10.90 8.20Z" fill="#a8a6a4" fill-rule="evenodd"/></svg>
<span class="t" style="left:1393.62px;top:505.00px;font:400 17.5px/1 'Liberation Sans',sans-serif;color:#252423;letter-spacing:0.251px;">Converti en table</span>
<span class="t" style="left:1393.06px;top:535.00px;font:400 17.5px/1 'Liberation Sans',sans-serif;color:#252423;letter-spacing:0.141px;">DataFeed développé</span>
<svg style="left:1658px;top:533.6px;" width="16.4" height="16.4" viewBox="0 0 16.4 16.4"><path d="M6.76 2.79L6.81 0.22L9.59 0.22L9.64 2.79L11.01 3.36L12.86 1.57L14.83 3.54L13.04 5.39L13.61 6.76L16.18 6.81L16.18 9.59L13.61 9.64L13.04 11.01L14.83 12.86L12.86 14.83L11.01 13.04L9.64 13.61L9.59 16.18L6.81 16.18L6.76 13.61L5.39 13.04L3.54 14.83L1.57 12.86L3.36 11.01L2.79 9.64L0.22 9.59L0.22 6.81L2.79 6.76L3.36 5.39L1.57 3.54L3.54 1.57L5.39 3.36ZM10.90 8.20A2.7 2.7 0 1 0 5.50 8.20A2.7 2.7 0 1 0 10.90 8.20Z" fill="#a8a6a4" fill-rule="evenodd"/></svg>
<span class="t" style="left:1393.06px;top:565.00px;font:400 17.5px/1 'Liberation Sans',sans-serif;color:#252423;letter-spacing:0.122px;">DataFeed.Context développé</span>
<svg style="left:1658px;top:563.6px;" width="16.4" height="16.4" viewBox="0 0 16.4 16.4"><path d="M6.76 2.79L6.81 0.22L9.59 0.22L9.64 2.79L11.01 3.36L12.86 1.57L14.83 3.54L13.04 5.39L13.61 6.76L16.18 6.81L16.18 9.59L13.61 9.64L13.04 11.01L14.83 12.86L12.86 14.83L11.01 13.04L9.64 13.61L9.59 16.18L6.81 16.18L6.76 13.61L5.39 13.04L3.54 14.83L1.57 12.86L3.36 11.01L2.79 9.64L0.22 9.59L0.22 6.81L2.79 6.76L3.36 5.39L1.57 3.54L3.54 1.57L5.39 3.36ZM10.90 8.20A2.7 2.7 0 1 0 5.50 8.20A2.7 2.7 0 1 0 10.90 8.20Z" fill="#a8a6a4" fill-rule="evenodd"/></svg>
<span class="t" style="left:1394.11px;top:595.00px;font:400 17.5px/1 'Liberation Sans',sans-serif;color:#252423;letter-spacing:0.423px;">Type modifié</span>
<span class="t" style="left:1393.06px;top:625.00px;font:400 17.5px/1 'Liberation Sans',sans-serif;color:#252423;letter-spacing:-0.018px;">DataFeed.Rows développé</span>
<svg style="left:1372.5px;top:626px;" width="14.8" height="13.4" viewBox="0 0 14.8 13.4"><path d="M0.8 0.8L14 12.6M14 0.8L0.8 12.6" fill="none" stroke="#605e5c" stroke-width="1.9"/></svg>
</body></html>
